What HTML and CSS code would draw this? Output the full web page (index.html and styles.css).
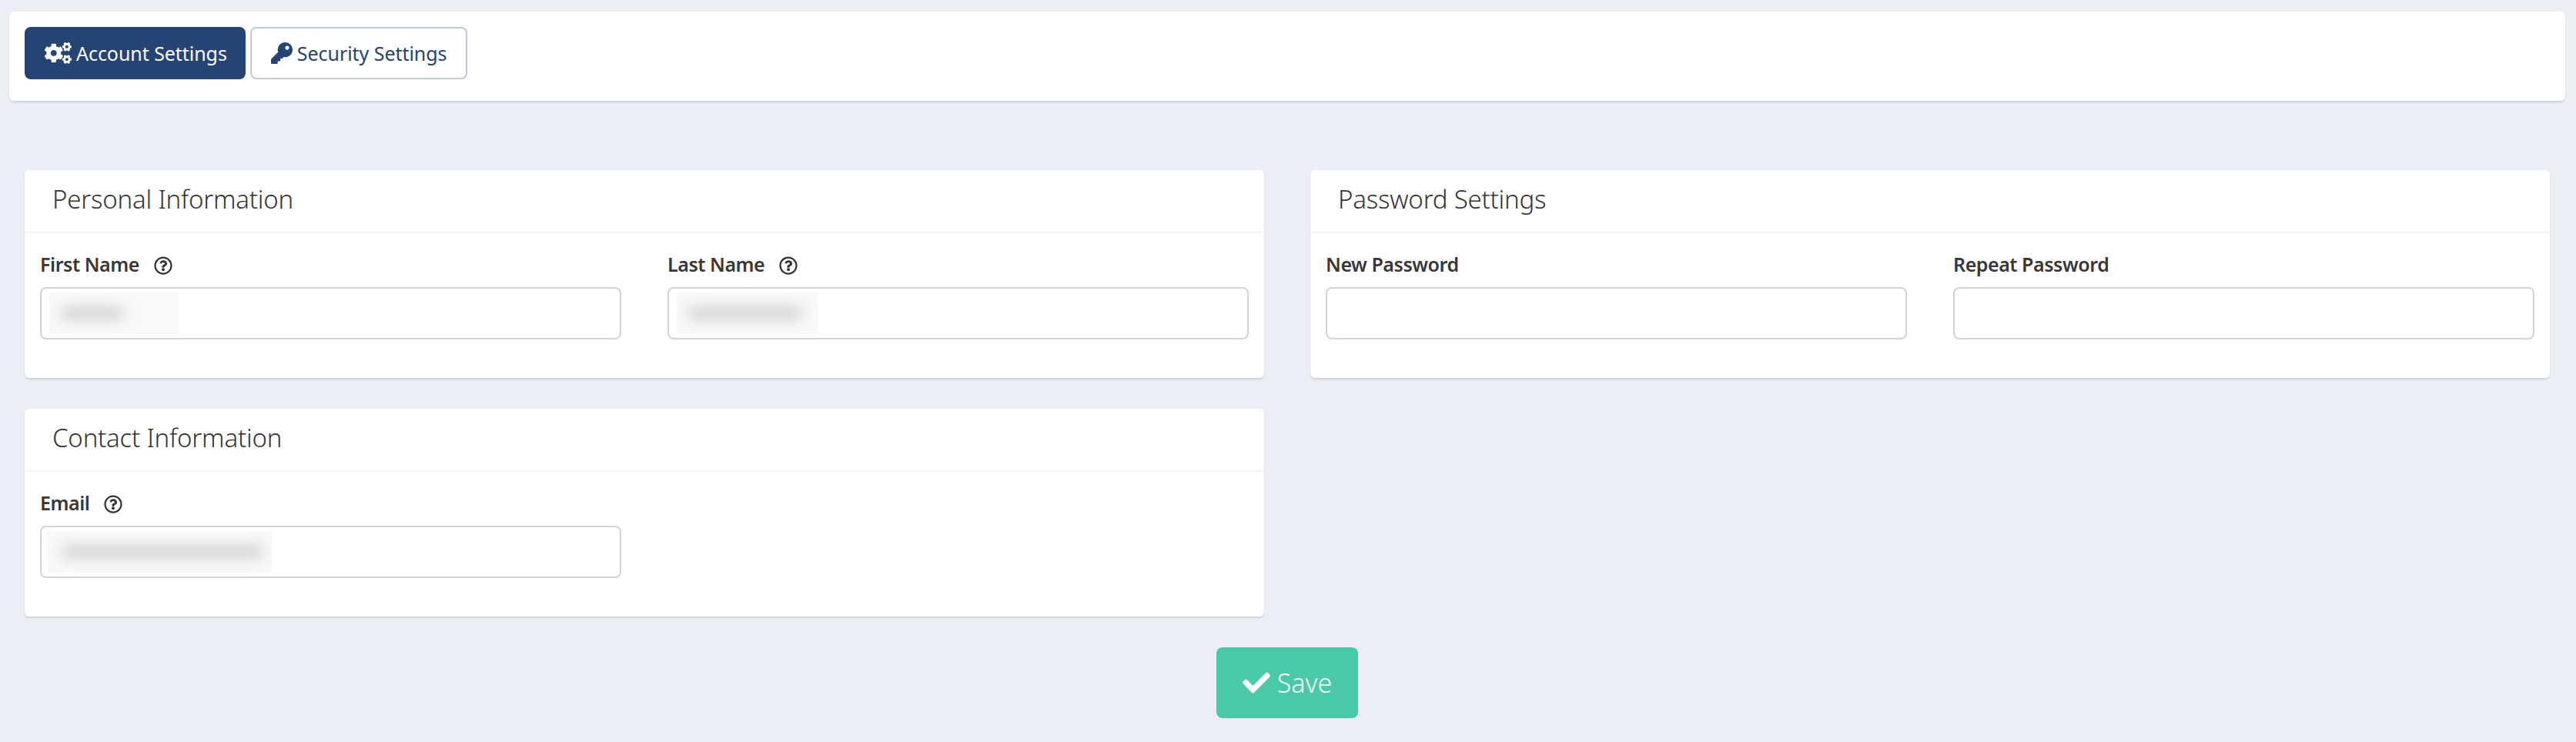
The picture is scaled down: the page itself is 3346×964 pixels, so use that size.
FILE: index.html
```html
<!DOCTYPE html>
<html lang="en">
<head>
<meta charset="utf-8">
<title>Settings</title>
<link rel="stylesheet" href="styles.css">
</head>
<body>
<svg class="defs" aria-hidden="true">
  <symbol id="i-cogs" viewBox="0 0 640 512"><path d="M512.1 191l-8.2 14.3c-3 5.3-9.4 7.5-15.1 5.4-11.8-4.4-22.6-10.7-32.1-18.6-4.6-3.8-5.8-10.5-2.8-15.7l8.2-14.3c-6.9-8-12.3-17.3-15.9-27.4h-16.5c-6 0-11.2-4.3-12.2-10.3-2-12-2.1-24.6 0-37.1 1-6 6.2-10.4 12.2-10.4h16.5c3.6-10.1 9-19.4 15.9-27.4l-8.2-14.3c-3-5.2-1.9-11.9 2.8-15.7 9.5-7.9 20.4-14.2 32.1-18.6 5.7-2.1 12.1.1 15.1 5.4l8.2 14.3c10.5-1.9 21.2-1.9 31.7 0L552 6.3c3-5.3 9.4-7.5 15.1-5.4 11.8 4.4 22.6 10.7 32.1 18.6 4.6 3.8 5.8 10.5 2.8 15.7l-8.2 14.3c6.9 8 12.3 17.3 15.9 27.4h16.5c6 0 11.2 4.3 12.2 10.3 2 12 2.1 24.6 0 37.1-1 6-6.2 10.4-12.2 10.4h-16.5c-3.6 10.1-9 19.4-15.9 27.4l8.2 14.3c3 5.2 1.9 11.9-2.8 15.7-9.5 7.9-20.4 14.2-32.1 18.6-5.7 2.1-12.1-.1-15.1-5.4l-8.2-14.3c-10.4 1.9-21.2 1.9-31.7 0zm-10.5-58.8c38.5 29.6 82.4-14.3 52.8-52.8-38.5-29.7-82.4 14.3-52.8 52.8zM386.3 286.1l33.7 16.8c10.1 5.8 14.5 18.1 10.5 29.1-8.9 24.2-26.4 46.4-42.6 65.8-7.4 8.9-20.2 11.1-30.3 5.3l-29.1-16.8c-16 13.7-34.6 24.6-54.9 31.7v33.6c0 11.6-8.3 21.6-19.7 23.6-24.6 4.2-50.4 4.4-75.9 0-11.5-2-20-11.9-20-23.6V418c-20.3-7.2-38.9-18-54.9-31.7L74 403c-10 5.8-22.9 3.6-30.3-5.3-16.2-19.4-33.3-41.6-42.2-65.7-4-10.9.4-23.2 10.5-29.1l33.3-16.8c-3.9-20.9-3.9-42.4 0-63.4L12 205.8c-10.1-5.8-14.6-18.1-10.5-29 8.9-24.2 26-46.4 42.2-65.8 7.4-8.9 20.2-11.1 30.3-5.3l29.1 16.8c16-13.7 34.6-24.6 54.9-31.7V57.1c0-11.5 8.2-21.5 19.6-23.5 24.6-4.2 50.5-4.4 76-.1 11.5 2 20 11.9 20 23.6v33.6c20.3 7.2 38.9 18 54.9 31.7l29.1-16.8c10-5.8 22.9-3.6 30.3 5.3 16.2 19.4 33.2 41.6 42.1 65.8 4 10.9.1 23.2-10 29.1l-33.7 16.8c3.9 21 3.9 42.5 0 63.5zm-117.6 21.1c59.2-77-28.7-164.9-105.7-105.7-59.2 77 28.7 164.9 105.7 105.7zm243.4 182.7l-8.2 14.3c-3 5.3-9.4 7.5-15.1 5.4-11.8-4.4-22.6-10.7-32.1-18.6-4.6-3.8-5.8-10.5-2.8-15.7l8.2-14.3c-6.9-8-12.3-17.3-15.9-27.4h-16.5c-6 0-11.2-4.3-12.2-10.3-2-12-2.1-24.6 0-37.1 1-6 6.2-10.4 12.2-10.4h16.5c3.6-10.1 9-19.4 15.9-27.4l-8.2-14.3c-3-5.2-1.9-11.9 2.8-15.7 9.5-7.9 20.4-14.2 32.1-18.6 5.7-2.1 12.1.1 15.1 5.4l8.2 14.3c10.5-1.9 21.2-1.9 31.7 0l8.2-14.3c3-5.3 9.4-7.5 15.1-5.4 11.8 4.4 22.6 10.7 32.1 18.6 4.6 3.8 5.8 10.5 2.8 15.7l-8.2 14.3c6.9 8 12.3 17.3 15.9 27.4h16.5c6 0 11.2 4.3 12.2 10.3 2 12 2.1 24.6 0 37.1-1 6-6.2 10.4-12.2 10.4h-16.5c-3.6 10.1-9 19.4-15.9 27.4l8.2 14.3c3 5.2 1.9 11.9-2.8 15.7-9.5 7.9-20.4 14.2-32.1 18.6-5.7 2.1-12.1-.1-15.1-5.4l-8.2-14.3c-10.4 1.9-21.2 1.9-31.7 0zM501.6 431c38.5 29.6 82.4-14.3 52.8-52.8-38.5-29.6-82.4 14.3-52.8 52.8z"/></symbol>
  <symbol id="i-key" viewBox="0 0 512 512"><path d="M512 176.001C512 273.203 433.202 352 336 352c-11.22 0-22.19-1.062-32.827-3.069l-24.012 27.014A23.999 23.999 0 0 1 261.223 384H224v40c0 13.255-10.745 24-24 24h-40v40c0 13.255-10.745 24-24 24H24c-13.255 0-24-10.745-24-24v-78.059c0-6.365 2.529-12.47 7.029-16.971l161.802-161.802C163.108 213.814 160 195.271 160 176 160 78.798 238.797.001 335.999 0 433.488-.001 512 78.511 512 176.001zM336 128c0 26.51 21.49 48 48 48s48-21.49 48-48-21.49-48-48-48-48 21.49-48 48z"/></symbol>
  <symbol id="i-check" viewBox="0 0 512 512"><path d="M173.898 439.404l-166.4-166.4c-9.997-9.997-9.997-26.206 0-36.204l36.203-36.204c9.997-9.998 26.207-9.998 36.204 0L192 312.69 432.095 72.596c9.997-9.997 26.207-9.997 36.204 0l36.203 36.204c9.997 9.997 9.997 26.206 0 36.204l-294.4 294.401c-9.998 9.997-26.207 9.997-36.204-.001z"/></symbol>
  <symbol id="i-help" viewBox="0 0 512 512"><path d="M256 8C119.043 8 8 119.083 8 256c0 136.997 111.043 248 248 248s248-111.003 248-248C504 119.083 392.957 8 256 8zm0 448c-110.532 0-200-89.431-200-200 0-110.495 89.472-200 200-200 110.491 0 200 89.471 200 200 0 110.53-89.431 200-200 200zm107.244-255.2c0 67.052-72.421 68.084-72.421 92.863V300c0 6.627-5.373 12-12 12h-45.647c-6.627 0-12-5.373-12-12v-8.659c0-35.745 27.1-50.034 47.579-61.516 17.561-9.845 28.324-16.541 28.324-29.579 0-17.246-21.999-28.693-39.784-28.693-23.189 0-33.894 10.977-48.942 29.969-4.057 5.12-11.46 6.071-16.666 2.124l-27.824-21.098c-5.107-3.872-6.251-11.066-2.644-16.363C184.846 131.491 214.94 112 261.794 112c49.071 0 101.45 38.304 101.45 88.8zM298 368c0 23.159-18.841 42-42 42s-42-18.841-42-42 18.841-42 42-42 42 18.841 42 42z"/></symbol>
</svg>

<nav class="tabs">
  <a class="tab tab-active"><svg class="icon icon-cogs"><use href="#i-cogs"/></svg>Account Settings</a>
  <a class="tab"><svg class="icon icon-key"><use href="#i-key"/></svg>Security Settings</a>
</nav>

<main class="forms">
  <section class="card">
    <h2 class="card-title">Personal Information</h2>
    <div class="card-body two-col">
      <div class="field">
        <label class="label">First Name<svg class="help"><use href="#i-help"/></svg></label>
        <div class="input"><span class="redact redact-first"><span class="smear"></span></span></div>
      </div>
      <div class="field">
        <label class="label">Last Name<svg class="help"><use href="#i-help"/></svg></label>
        <div class="input"><span class="redact redact-last"><span class="smear"></span></span></div>
      </div>
    </div>
  </section>

  <section class="card">
    <h2 class="card-title">Password Settings</h2>
    <div class="card-body two-col">
      <div class="field">
        <label class="label">New Password</label>
        <div class="input"></div>
      </div>
      <div class="field">
        <label class="label">Repeat Password</label>
        <div class="input"></div>
      </div>
    </div>
  </section>

  <section class="card">
    <h2 class="card-title">Contact Information</h2>
    <div class="card-body two-col">
      <div class="field">
        <label class="label">Email<svg class="help"><use href="#i-help"/></svg></label>
        <div class="input"><span class="redact redact-email"><span class="smear"></span></span></div>
      </div>
    </div>
  </section>
</main>

<div class="actions">
  <button class="save" type="button"><svg class="icon icon-check"><use href="#i-check"/></svg>Save</button>
</div>
</body>
</html>
```

FILE: styles.css
```css
* { box-sizing: border-box; }

html, body { margin: 0; padding: 0; }

body {
  background: #ebeef3;
  font-family: "Noto Sans", "Open Sans", sans-serif;
  color: #333;
  height: 964px;
  overflow: hidden;
}

.defs { display: none; }

.tabs {
  display: flex;
  gap: 6px;
  margin: 15px 14px 0 12px;
  height: 116px;
  padding: 20px;
  background: #fff;
  border-radius: 6px;
  box-shadow: 0 2px 2px rgba(40, 50, 80, .14);
}

.tab {
  display: flex;
  align-items: center;
  height: 68px;
  padding: 0 25px;
  border: 2px solid #c0c9da;
  border-radius: 8px;
  font-size: 25px;
  letter-spacing: -.05px;
  color: #254373;
  background: #fff;
  fill: #254373;
}

.tab-active {
  padding: 0 22px 0 24px;
  background: #254373;
  border-color: #254373;
  color: #fff;
  fill: #fff;
}

.icon { flex: none; }
.icon-cogs { width: 35px; height: 28px; margin-right: 6px; }
.icon-key { width: 28px; height: 28px; margin-right: 6px; }

.forms {
  display: grid;
  grid-template-columns: 1610px 1610px;
  column-gap: 60px;
  row-gap: 40px;
  margin: 90px 0 0 32px;
}

.card {
  height: 270px;
  background: #fff;
  border-radius: 6px;
  box-shadow: 0 2px 2px rgba(40, 50, 80, .14);
}

.card-title {
  margin: 0;
  height: 82px;
  padding: 0 36px 6px;
  display: flex;
  align-items: center;
  font-size: 33px;
  font-weight: 300;
  letter-spacing: -.2px;
  color: #333;
  border-bottom: 2px solid #f4f5f7;
}

.card-body { padding: 17px 20px 0; }

.two-col {
  display: grid;
  grid-template-columns: 1fr 1fr;
  column-gap: 60px;
}

.label {
  display: flex;
  align-items: center;
  height: 46px;
  font-size: 25px;
  font-weight: 600;
  letter-spacing: -.45px;
  color: #383838;
  margin-bottom: 7px;
}

.help {
  width: 24px;
  height: 24px;
  margin-left: 19px;
  margin-top: 4px;
  fill: #333;
}

.input {
  display: flex;
  align-items: center;
  height: 68px;
  padding: 0 10px;
  background: #fff;
  border: 2px solid #cfd4e0;
  border-radius: 8px;
}

.redact {
  display: flex;
  align-items: center;
  height: 54px;
  background: #f9f9f9;
}

.smear {
  display: block;
  height: 16px;
  background: #cfcfcf;
  border-radius: 8px;
  filter: blur(9px);
}

.redact-first { width: 168px; padding-left: 15px; }
.redact-first .smear { width: 82px; }
.redact-last { width: 184px; padding-left: 14px; }
.redact-last .smear { width: 150px; }
.redact-email { width: 292px; padding-left: 19px; margin-left: -3px; }
.redact-email .smear { width: 263px; }

.actions {
  display: flex;
  justify-content: center;
  margin: 40px 0 0 -2px;
}

.save {
  display: flex;
  align-items: center;
  justify-content: center;
  width: 184px;
  height: 92px;
  border: 0;
  border-radius: 8px;
  background: #4ac9a7;
  color: #fff;
  fill: #fff;
  font-family: inherit;
  font-size: 34px;
  font-weight: 300;
}

.icon-check { width: 36px; height: 36px; margin-right: 9px; }
```
